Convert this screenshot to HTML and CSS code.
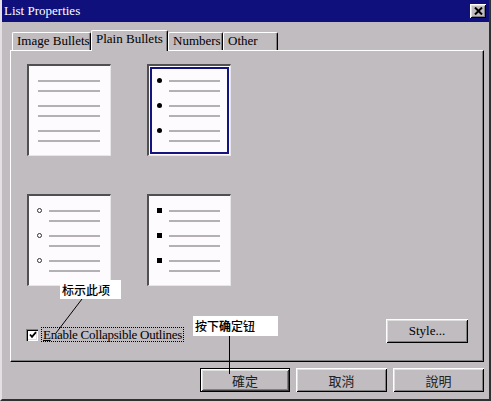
FILE: index.html
```html
<!DOCTYPE html>
<html>
<head>
<meta charset="utf-8">
<link rel="stylesheet" href="styles.css">
</head>
<body>
<div class="window">
  <div class="titlebar">
    <span class="title">List Properties</span>
    <span class="close"><svg width="9" height="8" viewBox="0 0 9 8"><path d="M1 0.5 L8 7.5 M8 0.5 L1 7.5" stroke="#000" stroke-width="2" fill="none"/></svg></span>
  </div>
  <div class="tabs">
    <div class="tab t1">Image Bullets</div>
    <div class="tab t2 active">Plain Bullets</div>
    <div class="tab t3">Numbers</div>
    <div class="tab t4">Other</div>
  </div>
  <div class="panel">
    <div class="grid">
      <div class="box plain">
        <div class="item"><div class="ln l1"></div><div class="ln l2"></div></div>
        <div class="item"><div class="ln l1"></div><div class="ln l2"></div></div>
        <div class="item"><div class="ln l1"></div><div class="ln l2"></div></div>
      </div>
      <div class="box bul sel">
        <div class="item"><span class="mk disc"></span><div class="ln l1"></div><div class="ln l2"></div></div>
        <div class="item"><span class="mk disc"></span><div class="ln l1"></div><div class="ln l2"></div></div>
        <div class="item"><span class="mk disc"></span><div class="ln l1"></div><div class="ln l2"></div></div>
      </div>
      <div class="box bul">
        <div class="item"><span class="mk circle"></span><div class="ln l1"></div><div class="ln l2"></div></div>
        <div class="item"><span class="mk circle"></span><div class="ln l1"></div><div class="ln l2"></div></div>
        <div class="item"><span class="mk circle"></span><div class="ln l1"></div><div class="ln l2"></div></div>
      </div>
      <div class="box bul">
        <div class="item"><span class="mk square"></span><div class="ln l1"></div><div class="ln l2"></div></div>
        <div class="item"><span class="mk square"></span><div class="ln l1"></div><div class="ln l2"></div></div>
        <div class="item"><span class="mk square"></span><div class="ln l1"></div><div class="ln l2"></div></div>
      </div>
    </div>
    <div class="row">
      <div class="check">
        <span class="cb"><svg width="8" height="8" viewBox="0 0 8 8"><path d="M1 3.5 L3 5.8 L7 1.2" stroke="#000" stroke-width="1.8" fill="none"/></svg></span>
        <span class="cblabel"><u>E</u>nable Collapsible Outlines</span>
      </div>
      <button class="btn style">Style...</button>
    </div>
  </div>
  <div class="footer">
    <button class="btn cjk ok">確定</button>
    <button class="btn cjk w91">取消</button>
    <button class="btn cjk w91">說明</button>
  </div>
  <div class="note n1">标示此项</div>
  <div class="note n2">按下<b>确</b>定钮</div>
  <svg class="leaders" width="491" height="401" viewBox="0 0 491 401">
    <line x1="82" y1="299" x2="56" y2="333" stroke="#000" stroke-width="1"/>
    <line x1="229.5" y1="336" x2="229.5" y2="374" stroke="#000" stroke-width="1"/>
  </svg>
</div>
</body>
</html>
```
FILE: styles.css
```css
body {
  margin: 0;
  background: #c0bcc0;
}

.window {
  position: relative;
  width: 491px;
  height: 401px;
  box-sizing: border-box;
  border-left: 2px solid #e4e0e4;
  border-right: 2px solid #303030;
  border-bottom: 2px solid #303030;
  background: #c0bcc0;
  font-family: "Liberation Serif", serif;
  font-size: 13px;
  color: #000;
  display: flex;
  flex-direction: column;
}

.titlebar {
  height: 22px;
  flex: none;
  background: #10107c;
  color: #fff;
  display: flex;
  align-items: center;
  padding-left: 2px;
}

.title {
  font-size: 13px;
}

.close {
  margin-left: auto;
  margin-right: 3px;
  width: 16px;
  height: 14px;
  background: #c0bcc0;
  box-shadow: inset 1px 1px #fff, inset -1px -1px #000, inset 2px 2px #dfdfdf, inset -2px -2px #808080;
  display: flex;
  align-items: center;
  justify-content: center;
}

.tabs {
  position: relative;
  z-index: 1;
  height: 28px;
  flex: none;
  box-sizing: border-box;
  display: flex;
  align-items: flex-end;
  padding-left: 10px;
}

.tab {
  height: 18px;
  box-sizing: border-box;
  border-top: 1px solid #fff;
  border-left: 1px solid #fff;
  border-right: 1px solid #000;
  border-top-left-radius: 2px;
  border-top-right-radius: 2px;
  box-shadow: inset -1px 0 #808080;
  padding: 0 0 0 4px;
  line-height: 15px;
  white-space: nowrap;
  background: #c0bcc0;
}

.tab.active {
  height: 21px;
  margin-bottom: -1px;
}

.t1 { width: 79px; }
.t2 { width: 77px; }
.t3 { width: 55px; }
.t4 { width: 55px; }

.panel {
  width: 474px;
  height: 312px;
  flex: none;
  box-sizing: border-box;
  margin-left: 8px;
  border-top: 1px solid #fff;
  border-left: 1px solid #fff;
  border-right: 1px solid #000;
  border-bottom: 1px solid #000;
  box-shadow: inset -1px -1px #808080;
  display: flex;
  flex-direction: column;
}

.grid {
  display: grid;
  grid-template-columns: 84px 84px;
  grid-template-rows: 92px 92px;
  column-gap: 36px;
  row-gap: 38px;
  margin: 13px 0 0 16px;
}

.box {
  position: relative;
  box-sizing: border-box;
  border-top: 2px solid #505050;
  border-left: 2px solid #505050;
  border-right: 1px solid #e8e6e8;
  border-bottom: 1px solid #e8e6e8;
  background: #fdfbfd;
  padding: 14px 0 0 9px;
}

.box.bul {
  padding-left: 8px;
}

.box.sel::after {
  content: "";
  position: absolute;
  inset: 1px;
  border: 2px solid #141480;
}

.item {
  display: grid;
  grid-template-columns: 12px 51px;
  grid-template-rows: 2px 2px;
  row-gap: 8px;
  margin-bottom: 13px;
}

.plain .item {
  grid-template-columns: 0 62px;
}

.ln {
  background: #b4b0b4;
}

.l1 { grid-column: 2; grid-row: 1; }
.l2 { grid-column: 2; grid-row: 2; }

.mk {
  grid-column: 1;
  grid-row: 1;
  align-self: start;
  width: 5px;
  height: 5px;
  margin-top: -2px;
  box-sizing: border-box;
}

.disc {
  background: #000;
  border-radius: 50%;
}

.circle {
  border: 1px solid #303030;
  border-radius: 50%;
  background: #fff;
}

.square {
  background: #000;
}

.row {
  display: flex;
  align-items: flex-end;
  justify-content: space-between;
  margin: 33px 15px 0 15px;
}

.check {
  display: flex;
  align-items: center;
  gap: 3px;
  margin-bottom: 1px;
}

.cb {
  width: 12px;
  height: 12px;
  box-sizing: border-box;
  background: #fff;
  box-shadow: inset 1px 1px #808080, inset 2px 2px #000, inset -1px -1px #fff, inset -2px -2px #dfdfdf;
  display: flex;
  align-items: center;
  justify-content: center;
}

.cb svg {
  margin: 1px 0 0 1px;
}

.cblabel {
  border: 1px dotted #000;
  padding: 0 1px;
  line-height: 13px;
  letter-spacing: -0.25px;
  white-space: nowrap;
}

.btn {
  font: inherit;
  color: #000;
  background: #c0bcc0;
  border: 0;
  padding: 0;
  height: 24px;
  box-shadow: inset 1px 1px #fff, inset -1px -1px #000, inset 2px 2px #dfdfdf, inset -2px -2px #808080;
}

.style {
  width: 82px;
}

.footer {
  display: flex;
  justify-content: flex-end;
  gap: 6px;
  margin-top: 6px;
  padding-right: 5px;
}

.cjk {
  font-family: "Noto Sans CJK TC", sans-serif;
  font-size: 13px;
  color: #222;
}

.ok {
  width: 90px;
  box-sizing: border-box;
  border: 1px solid #000;
  box-shadow: inset 1px 1px #fff, inset -1px -1px #404040, inset 2px 2px #dfdfdf, inset -2px -2px #808080;
}

.w91 {
  width: 91px;
}

.note {
  position: absolute;
  background: #fff;
  font-family: "Noto Sans CJK SC", sans-serif;
  font-size: 12px;
  font-weight: 500;
  color: #000;
  box-sizing: border-box;
  padding-left: 2px;
  white-space: nowrap;
}

.n1 {
  left: 58px;
  top: 280px;
  width: 61px;
  height: 19px;
  line-height: 19px;
}

.n2 {
  left: 191px;
  top: 316px;
  width: 85px;
  height: 20px;
  line-height: 20px;
}

.leaders {
  position: absolute;
  left: -2px;
  top: 0;
  pointer-events: none;
}
```
